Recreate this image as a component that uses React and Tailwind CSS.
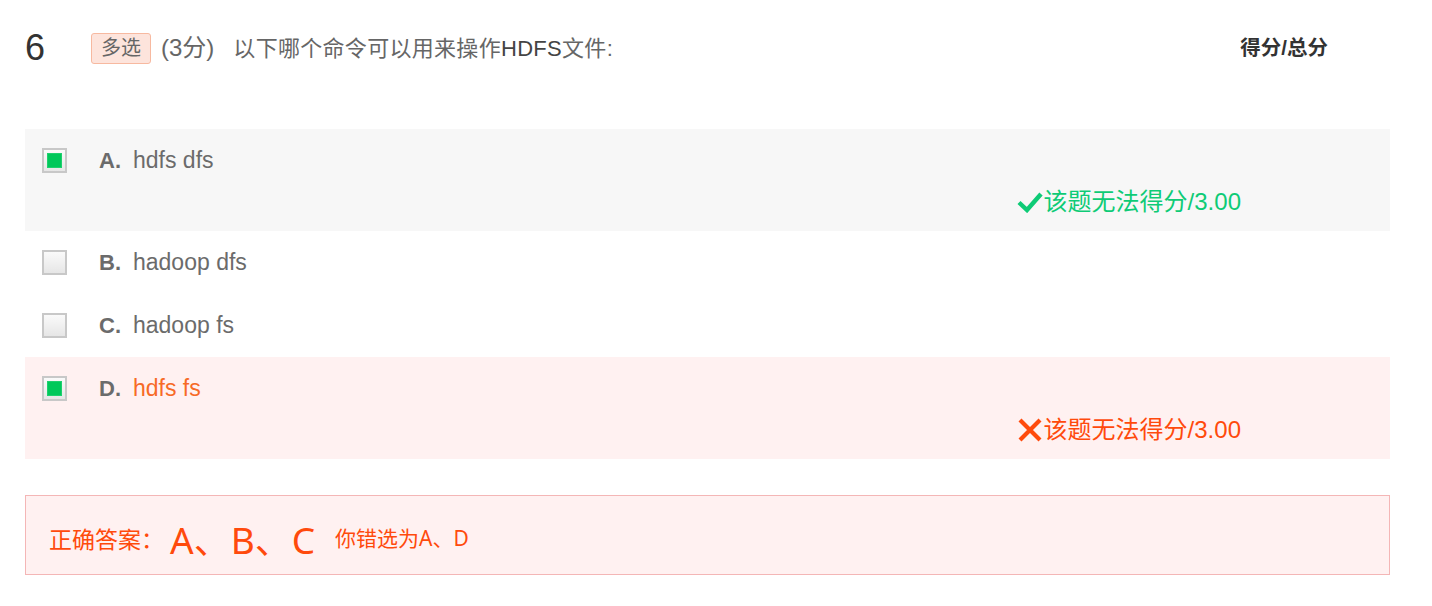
import React from 'react';

const OPTIONS = [
  { key: 'A', text: 'hdfs dfs', checked: true, result: 'right' },
  { key: 'B', text: 'hadoop dfs' },
  { key: 'C', text: 'hadoop fs' },
  { key: 'D', text: 'hdfs fs', checked: true, result: 'wrong' },
];

function Checkbox({ checked }) {
  return (
    <div className="w-[25px] h-[25px] border-2 border-[#c8c8c8] bg-gradient-to-b from-[#fafafa] to-[#e6e6e6] p-[3px] shrink-0">
      {checked && <div className="w-full h-full bg-[#00c85a] border border-[#1ed06e]" />}
    </div>
  );
}

function Option({ opt }) {
  const bg = opt.result === 'right' ? 'bg-[#f7f7f7]' : opt.result === 'wrong' ? 'bg-[#fff1f1]' : '';
  return (
    <div className={`${bg} ${opt.result ? 'h-[102px]' : 'h-[63px]'} pl-[17px] pt-[19px]`}>
      <div className="flex items-center h-[25px]">
        <Checkbox checked={opt.checked} />
        <span className="ml-[32px] w-[34px] text-[22px] font-bold text-[#6b6b6b]">{opt.key}.</span>
        <span className={`text-[23px] ${opt.result === 'wrong' ? 'text-[#f76a26]' : 'text-[#6b6b6b]'}`}>{opt.text}</span>
      </div>
      {opt.result && (
        <div className="flex justify-end pr-[149px] mt-[14px]">
          <span className={`flex items-center text-[24px] leading-[30px] ${opt.result === 'right' ? 'text-[#0ecb76]' : 'text-[#ff4a0c]'}`}>
            {opt.result === 'right' ? (
              <svg width="26" height="22" viewBox="0 0 26 22" className="mr-[1px]">
                <path d="M2 11.5 L10 19 L24 3" fill="none" stroke="currentColor" strokeWidth="4.4" strokeLinecap="butt" />
              </svg>
            ) : (
              <svg width="26" height="24" viewBox="0 0 26 24" className="mr-[1px]">
                <path d="M3 2 L23 22 M23 2 L3 22" fill="none" stroke="currentColor" strokeWidth="4.2" />
              </svg>
            )}
            该题无法得分/3.00
          </span>
        </div>
      )}
    </div>
  );
}

export default function App() {
  return (
    <div className="w-[1432px] h-[606px] bg-white font-['Liberation_Sans','Noto_Sans_CJK_SC',sans-serif] pt-[28px]">
      <div className="flex items-center pl-[25px] pr-[104px] h-[40px]">
        <span className="text-[36px] text-[#333] w-[66px] leading-none">6</span>
        <span className="border border-[#f7b9a0] bg-[#fde4dc] text-[#666] text-[20px] rounded-[3px] px-[9px] h-[31px] flex items-center">多选</span>
        <span className="ml-[10px] text-[24px] text-[#666]">(3分)</span>
        <span className="ml-[19px] text-[22px] tracking-[0.3px] text-[#666]">以下哪个命令可以用来操作<span className="text-[#444]">HDFS</span>文件:</span>
        <span className="ml-auto text-[20.5px] font-bold text-[#333]">得分/总分</span>
      </div>
      <div className="mx-[25px] w-[1365px] mt-[61px]">
        {OPTIONS.map((o) => (
          <Option key={o.key} opt={o} />
        ))}
      </div>
      <div className="mx-[25px] w-[1365px] mt-[36px] h-[80px] border border-[#f4b6b6] bg-[#fff1f1] flex items-center pl-[23px] pt-[8px] text-[#ff4a0c] font-['Noto_Sans','Noto_Sans_CJK_SC',sans-serif]">
        <span className="text-[23px]">正确答案：</span>
        <span className="ml-[6px] text-[37px] leading-none">A、B、C</span>
        <span className="ml-[20px] text-[21px]">你错选为A、D</span>
      </div>
    </div>
  );
}
